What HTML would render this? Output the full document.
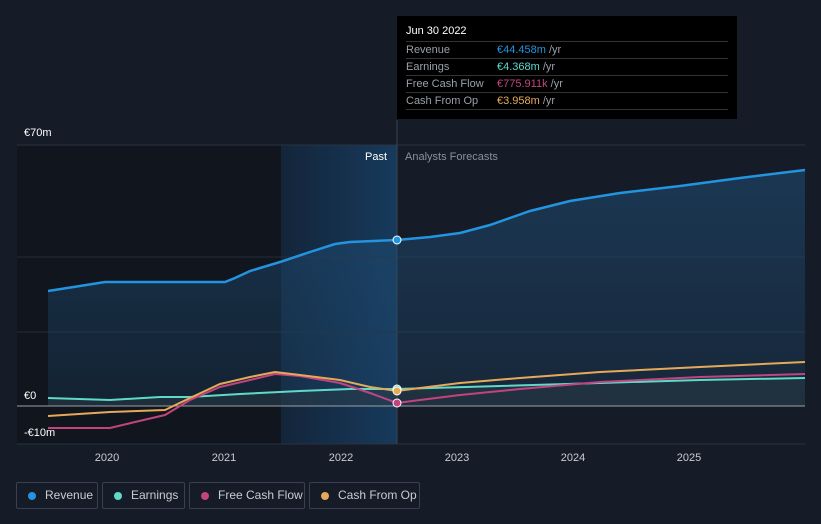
<!DOCTYPE html>
<html><head><meta charset="utf-8"><style>
body{margin:0;background:#151b27;width:821px;height:524px;overflow:hidden;font-family:"Liberation Sans",sans-serif;position:relative}
.tt{position:absolute;left:397px;top:16px;width:340px;height:103px;background:#000;color:#fff;font-size:11px}
.tt .h{position:absolute;left:9px;top:9px}
.row{position:absolute;left:9px;width:322px;border-top:1px solid #333;height:16px;line-height:16px;color:#9aa0a8}
.row span{position:absolute;left:91px}
.lg{position:absolute;top:482px;height:27px;border:1px solid #3a4050;border-radius:2px;color:#c9ccd1;font-size:12px;line-height:25px;box-sizing:border-box}
.lg i{position:absolute;left:11px;top:9px;width:8px;height:8px;border-radius:50%}
.lg b{font-weight:normal;position:absolute;left:28px}
</style></head><body>
<svg width="821" height="524" style="position:absolute;left:0;top:0">
<rect x="17" y="145" width="264" height="299" fill="#10151e"/>
<defs><linearGradient id="g" x1="0" x2="1"><stop offset="0" stop-color="#13253a"/><stop offset="1" stop-color="#173a5c"/></linearGradient>
<linearGradient id="rv" x1="0" y1="0" x2="0" y2="1"><stop offset="0" stop-color="#1e4a70" stop-opacity=".6"/><stop offset="1" stop-color="#1e4a70" stop-opacity=".25"/></linearGradient></defs>
<rect x="281" y="145" width="116" height="299" fill="url(#g)"/>
<line x1="17" y1="145" x2="805" y2="145" stroke="#2c3340"/>
<line x1="17" y1="257" x2="805" y2="257" stroke="#262d3a"/>
<line x1="17" y1="332" x2="805" y2="332" stroke="#262d3a"/>
<line x1="17" y1="444" x2="805" y2="444" stroke="#2c3340"/>
<line x1="397" y1="120" x2="397" y2="444" stroke="#3b4556"/>
<path d="M48,291 L80,286 105,282 140,282 225,282 235,278 250,271 280,262 310,252 335,244 350,242 397,240 430,237 460,233 490,225 530,211 570,201 620,193 680,186 740,178 805,170 L805,406 L48,406Z" fill="url(#rv)"/>
<path d="M48,398 L110,400 160,397 190,397 240,394 300,391 350,389 397,389 500,386 600,383 700,380 805,378 L805,406 48,406Z" fill="#2a3a44" opacity=".5"/>
<line x1="17" y1="406" x2="805" y2="406" stroke="#9aa0a8"/>
<polyline fill="none" stroke="#2394df" stroke-width="2.5" points="48,291 80,286 105,282 140,282 225,282 235,278 250,271 280,262 310,252 335,244 350,242 397,240 430,237 460,233 490,225 530,211 570,201 620,193 680,186 740,178 805,170"/>
<polyline fill="none" stroke="#5fd9c8" stroke-width="2" points="48,398 110,400 160,397 190,397 240,394 300,391 350,389 397,389 500,386 600,383 700,380 805,378"/>
<polyline fill="none" stroke="#c2447f" stroke-width="2" points="48,428 110,428 135,422 165,415 190,400 220,387 250,380 275,374 300,376 340,383 370,393 397,403 420,400 460,395 520,389 600,382 700,377 805,374"/>
<polyline fill="none" stroke="#e6a95a" stroke-width="2" points="48,416 110,412 165,410 190,398 220,384 250,377 275,372 300,375 340,380 370,387 397,391 420,388 460,383 520,378 600,372 700,367 805,362"/>
<circle cx="397" cy="240" r="4" fill="#2394df" stroke="#fff" stroke-width="1"/>
<circle cx="397" cy="389" r="4" fill="#5fd9c8" stroke="#fff" stroke-width="1"/>
<circle cx="397" cy="391" r="4" fill="#e6a95a" stroke="#fff" stroke-width="1"/>
<circle cx="397" cy="403" r="4" fill="#c2447f" stroke="#fff" stroke-width="1"/>
<g font-size="11" fill="#fff" font-family="Liberation Sans">
<text x="24" y="136">€70m</text><text x="24" y="399">€0</text><text x="24" y="436">-€10m</text>
<text x="365" y="160">Past</text><text x="405" y="160" fill="#8a919c">Analysts Forecasts</text>
<g fill="#c9ccd1" text-anchor="middle"><text x="107" y="461">2020</text><text x="224" y="461">2021</text><text x="341" y="461">2022</text><text x="457" y="461">2023</text><text x="573" y="461">2024</text><text x="689" y="461">2025</text></g>
</g></svg>
<div class="tt"><div class="h">Jun 30 2022</div>
<div class="row" style="top:25px">Revenue<span><em style="font-style:normal;color:#2394df">€44.458m</em> /yr</span></div>
<div class="row" style="top:42px">Earnings<span><em style="font-style:normal;color:#5fd9c8">€4.368m</em> /yr</span></div>
<div class="row" style="top:59px">Free Cash Flow<span><em style="font-style:normal;color:#c2447f">€775.911k</em> /yr</span></div>
<div class="row" style="top:76px">Cash From Op<span><em style="font-style:normal;color:#e6a95a">€3.958m</em> /yr</span></div>
<div class="row" style="top:93px;height:0"></div></div>
<div class="lg" style="left:16px;width:82px"><i style="background:#2394df"></i><b>Revenue</b></div>
<div class="lg" style="left:102px;width:83px"><i style="background:#5fd9c8"></i><b>Earnings</b></div>
<div class="lg" style="left:189px;width:116px"><i style="background:#c2447f"></i><b>Free Cash Flow</b></div>
<div class="lg" style="left:309px;width:111px"><i style="background:#e6a95a"></i><b>Cash From Op</b></div>
</body></html>
